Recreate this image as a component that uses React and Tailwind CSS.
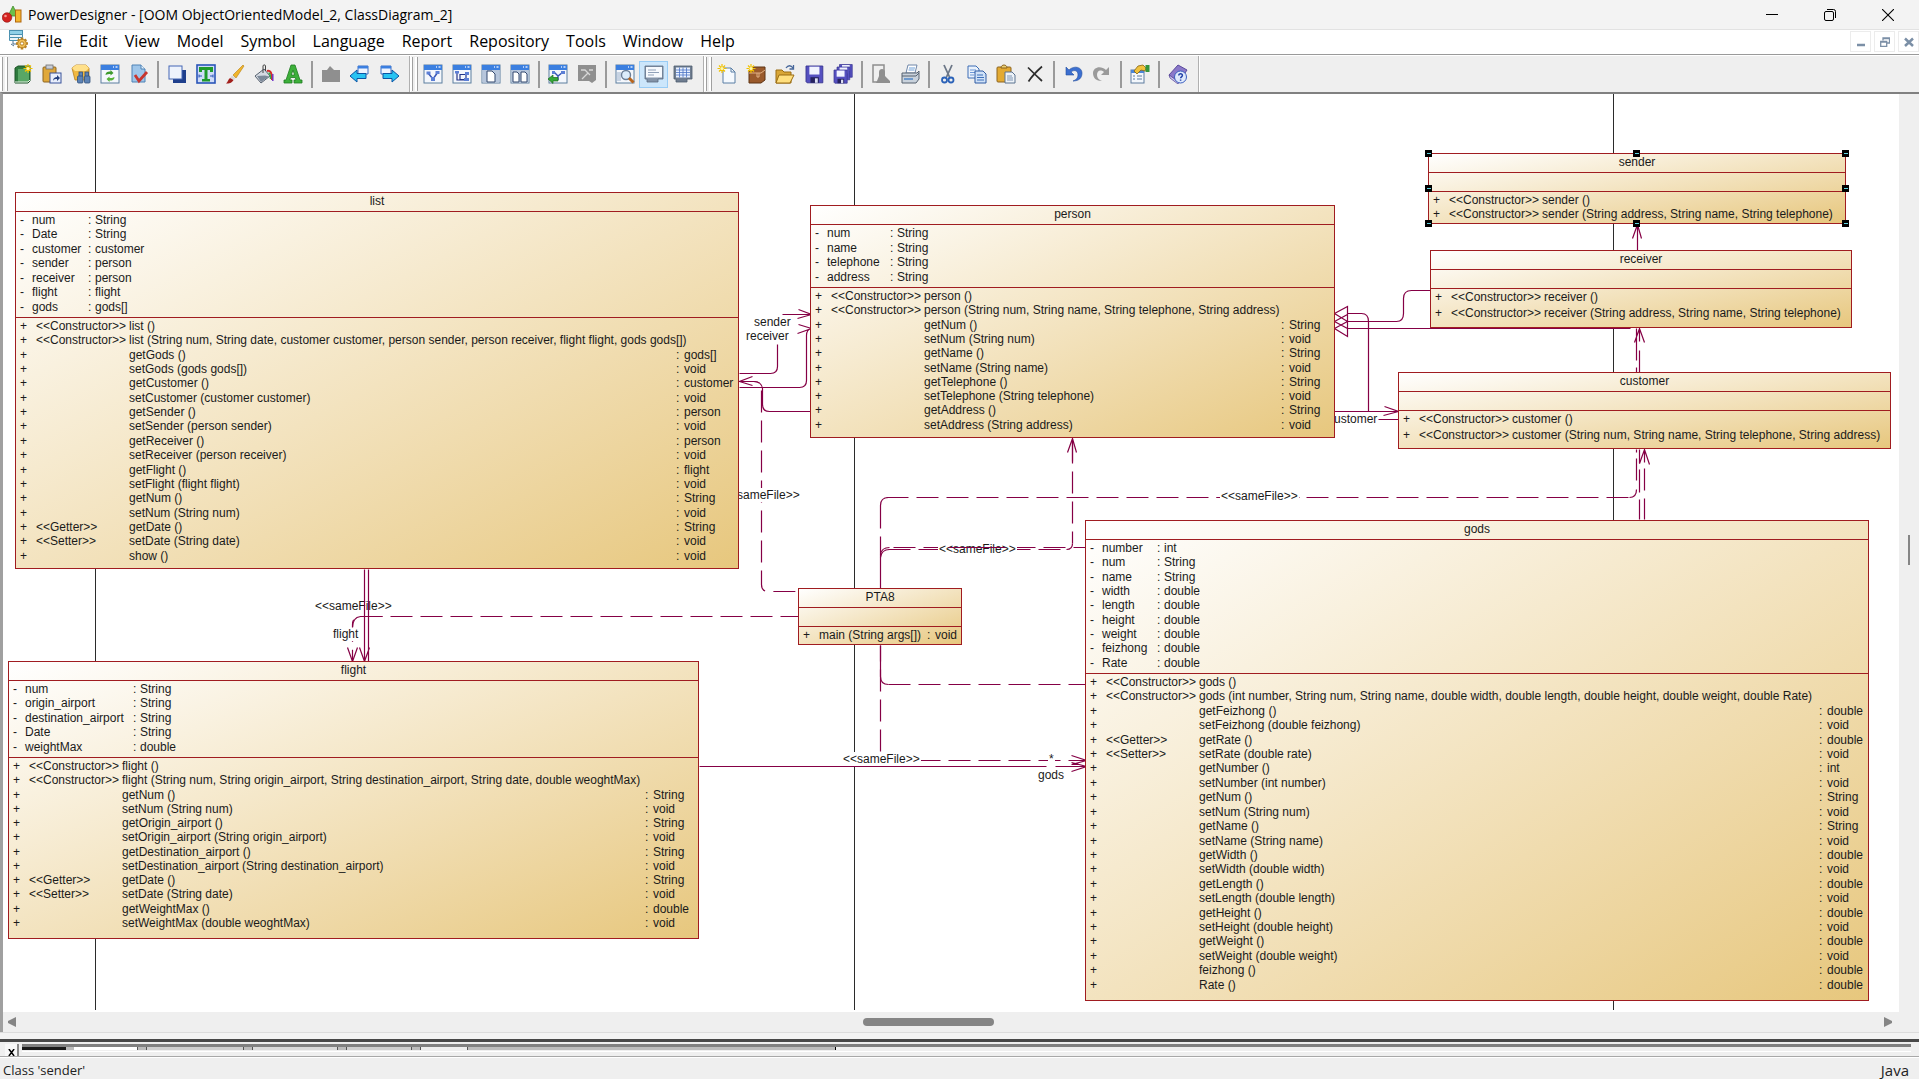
import React from "react";

const LINE = "#850045";

/* ---------- toolbar icons, each on a 20 x 20 grid ---------- */

const PageWin = ({ children }) => (
  <>
    <rect x="1" y="1" width="18" height="18" fill="#f4f7fc" stroke="#5d7f9f" />
    <rect x="1" y="1" width="18" height="5" fill="#3b7fe0" />
    <path d="M13 3h1M15.500 3h2" stroke="#dbe9ff" strokeWidth="1.5" />
    {children}
  </>
);

const Sparkle = () => (
  <g stroke="#f2c200" strokeWidth="1.200">
    <path d="M5 0v9M.5 4.500h9M2 1.500l6 6M8 1.500l-6 6" />
    <circle cx="5" cy="4.500" r="1.600" fill="#fff7b0" stroke="none" />
  </g>
);

const Floppy = () => (
  <>
    <path d="M0 0h15v15H1l-1-1z" fill="#5550c0" stroke="#37338f" strokeWidth=".8" />
    <rect x="3" y=".6" width="9" height="7" fill="#f1f3ff" />
    <rect x="4" y="10" width="7.500" height="5" fill="#26225f" />
    <rect x="8" y="11" width="2.500" height="4" fill="#dfe2f5" />
  </>
);

const icons = {
  book: (
    <>
      <path d="M2 4l3-2h12v15l-2 2H2z" fill="#2d7a3d" stroke="#1d5428" />
      <path d="M5 5h11v13H5z" fill="#58a765" />
      <path d="M2 18h13l2-2" stroke="#e8efe8" fill="none" />
      <g transform="translate(10 0)"><Sparkle /></g>
    </>
  ),
  pasteLink: (
    <>
      <rect x="1" y="3" width="13" height="15" rx="1" fill="#e0a83a" stroke="#8d6520" />
      <rect x="4" y="1" width="7" height="4" fill="#c7ccd6" stroke="#6f6f6f" strokeWidth=".8" />
      <rect x="8" y="9" width="11" height="10" fill="#e8eefb" stroke="#39529a" />
      <path d="M11 17c0-3 2-4 4-4v-2l3 3-3 3v-2c-2 0-3 0-4 2z" fill="#24407f" />
    </>
  ),
  find: (
    <>
      <path d="M1 4l4-3h10l3 3v8l-3 4H4z" fill="#f0b840" stroke="#b98220" strokeWidth=".8" />
      <path d="M1 4l3 3h11l3-3-3-3H5z" fill="#ffe08a" />
      <g fill="#5d83b5" stroke="#30507c" strokeWidth=".8">
        <rect x="8" y="8" width="3.500" height="5" /><rect x="14" y="8" width="3.500" height="5" />
        <rect x="6.500" y="12" width="5.500" height="7" rx="1" /><rect x="13.500" y="12" width="5.500" height="7" rx="1" />
      </g>
    </>
  ),
  refresh: (
    <PageWin>
      <path d="M5.500 11c0-3 3-4 5-3.500V6l3 3-3 2.500V10c-2 0-3 0-5 1z" fill="#3c9a2c" />
      <path d="M14.500 13c0 3-3 4-5 3.500V18l-3-3 3-2.500V14c2 0 3 0 5-1z" fill="#57b43a" />
    </PageWin>
  ),
  check: (
    <>
      <path d="M3 1h9l4 4v13H3z" fill="#9fc6ea" stroke="#4f82b5" />
      <path d="M12 1v4h4" fill="#e5f1fb" stroke="#4f82b5" />
      <path d="M6 11l4 6 8-9" fill="none" stroke="#c8352e" strokeWidth="2.800" />
    </>
  ),
  shadow: (
    <>
      <rect x="6" y="6" width="13" height="13" fill="#1f3f8c" />
      <rect x="2" y="2" width="13" height="13" fill="#eef3fc" stroke="#4467b5" />
    </>
  ),
  textTool: (
    <>
      <rect x="1" y="1" width="18" height="18" fill="#cfdcf7" stroke="#2a55b8" strokeWidth="1.600" />
      <path d="M3 3h14v5h-3V6h-2.500v9H14v2.500H6V15h2.500V6H6v2H3z" fill="#1f9a2c" />
      <path d="M3 12h3M14 12h3M3 10.500v3M17 10.500v3" stroke="#2a55b8" />
    </>
  ),
  brush: (
    <>
      <path d="M8 11L18 1l1 1-8 12z" fill="#f0b52c" stroke="#b67d12" strokeWidth=".6" />
      <path d="M7 11.500l3.500 2.500L9 16l-4-2z" fill="#d8d8d8" />
      <path d="M5 14l3.500 2C7 19 4 19.500 1 19.500 3 18 3 15.500 5 14z" fill="#a3201c" />
    </>
  ),
  bucket: (
    <>
      <path d="M1 12L10 5l6 7-9 7z" fill="#d5dae2" stroke="#55606e" />
      <path d="M3 12l8-.5 4 1L7 18z" fill="#7c8999" />
      <path d="M9 9V2c0-1.500 2.500-1.500 2.500 0v5" fill="none" stroke="#444" />
      <path d="M13 7c3-1 5 1 5 9" fill="none" stroke="#d42a2a" strokeWidth="2" />
      <path d="M14.500 9c1.500 0 2 3 2 6" fill="none" stroke="#2bb04a" strokeWidth="1.500" />
      <path d="M18.800 10v7" stroke="#7337c9" strokeWidth="1.500" />
    </>
  ),
  font: (
    <path d="M8 1h4l5 15h2v3h-8v-3h2l-.7-2.500H7.500L6.800 16H9v3H1v-3h2zM10 6l-1.700 5h3.300z" fill="#3db03a" stroke="#1f7c22" strokeWidth=".8" />
  ),
  greyFolder: <path d="M1 6h5l3-4 4 4h6v12H1z" fill="#8f8f8f" />,
  prev: (
    <>
      <path d="M8 2h10v8H8z" fill="#eef4ff" stroke="#3b6fc4" /><path d="M8 2h10v2.500H8z" fill="#3b7fe0" />
      <path d="M0 12l7-6v3.500h9v5H7V18z" fill="#27c3f2" stroke="#0a54a5" />
    </>
  ),
  next: (
    <>
      <path d="M2 2h10v8H2z" fill="#eef4ff" stroke="#3b6fc4" /><path d="M2 2h10v2.500H2z" fill="#3b7fe0" />
      <path d="M20 12l-7-6v3.500H4v5h9V18z" fill="#27c3f2" stroke="#0a54a5" />
    </>
  ),
  model1: (
    <PageWin>
      <path d="M5 9l5 6 5-7" fill="none" stroke="#3654b5" strokeWidth="1.500" />
      <path d="M3.500 7.500h4v3h-4zM12.500 7h4v3h-4zM8 13h4v4H8z" fill="#5c7fd6" />
    </PageWin>
  ),
  model2: (
    <PageWin>
      <path d="M5 8v8h9M8 10.500h6v5H8z" fill="none" stroke="#24358a" strokeWidth="1.200" />
      <path d="M3 7h4v2.500H3zM13 8h4v3h-4zM12 14h5v3h-5z" fill="#5c7fd6" />
    </PageWin>
  ),
  page1: (
    <PageWin>
      <rect x="1.500" y="6" width="17" height="12.500" fill="#b7c6dc" />
      <path d="M6 7h5l3 3v8H6z" fill="#fff" stroke="#33486e" />
    </PageWin>
  ),
  page2: (
    <PageWin>
      <rect x="1.500" y="6" width="17" height="12.500" fill="#b7c6dc" />
      <path d="M3 8h4l2 2v8H3zM11 8h4l2 2v8h-6z" fill="#fff" stroke="#33486e" />
    </PageWin>
  ),
  modelBack: (
    <PageWin>
      <path d="M6 8l4 4 5-4M10 12v4" fill="none" stroke="#3654b5" strokeWidth="1.400" />
      <path d="M4 7h3v3H4zM13 7h4v3h-4z" fill="#5c7fd6" />
      <path d="M0 15l5-4v2.500h5v3.500H5V19.500z" fill="#35a838" stroke="#1a6a20" strokeWidth=".7" />
    </PageWin>
  ),
  greyWin: (
    <>
      <path d="M1 1h18v15l-4 3-3-2H1z" fill="#8f8f8f" />
      <path d="M4 6h4l5 5M12 6h4M5 15l6-6" fill="none" stroke="#d8d8d8" strokeWidth="1.300" />
    </>
  ),
  winFind: (
    <PageWin>
      <path d="M3 8v9M5 8v9" stroke="#9bb0cb" />
      <circle cx="11" cy="11" r="4.500" fill="#dcecfb" stroke="#6c7f97" strokeWidth="1.400" />
      <path d="M14 14l4.500 4.500" stroke="#b9651d" strokeWidth="3" />
    </PageWin>
  ),
  output: (
    <>
      <path d="M1 2h18v13h-5v3H3v-3H1z" fill="#8393a8" stroke="#5b6b80" strokeWidth=".8" />
      <rect x="2" y="3" width="16" height="10.500" fill="#f6f9fd" />
      <path d="M4 6h8M4 8.500h11M4 11h6" stroke="#8fa0b8" />
    </>
  ),
  grid: (
    <>
      <path d="M1 2h18v13h-5v3H3v-3H1z" fill="#6f7d90" stroke="#4f5d70" strokeWidth=".8" />
      <rect x="3" y="3.500" width="14" height="10" fill="#eaf2ff" />
      <path d="M3 6h14M3 8.500h14M3 11h14M6.500 3.500v10M10 3.500v10M13.500 3.500v10" stroke="#4b74c4" strokeWidth=".8" />
    </>
  ),
  newPage: (
    <>
      <path d="M6 4h8l4 4v11H6z" fill="#f5f9fe" stroke="#5b7ea5" /><path d="M14 4v4h4" fill="none" stroke="#5b7ea5" />
      <Sparkle />
    </>
  ),
  newProject: (
    <>
      <path d="M3 6l5-3h11v13l-4 3H3z" fill="#9a5a2c" stroke="#5f3415" />
      <path d="M3 9h12l4-3M11 9v4h2V9" fill="none" stroke="#e2b184" />
      <Sparkle />
    </>
  ),
  open: (
    <>
      <path d="M1 6h6l2 2h7v11H1z" fill="#d9a637" stroke="#9a6d14" /><path d="M4 11h15l-4 8H1z" fill="#ffdf7e" stroke="#9a6d14" />
      <path d="M11 4c2-3 5-3 7 0M18.500 1v4h-4" fill="none" stroke="#47679b" strokeWidth="1.300" />
    </>
  ),
  save: <g transform="translate(2 2) scale(1.120)"><Floppy /></g>,
  saveAll: (
    <>
      <g transform="translate(6.500 .5) scale(.85)"><Floppy /></g>
      <g transform="translate(4 3) scale(.85)"><Floppy /></g>
      <g transform="translate(1 6) scale(.88)"><Floppy /></g>
    </>
  ),
  preview: (
    <>
      <path d="M2 1h11v17H2z" fill="none" stroke="#8f8f8f" strokeWidth="1.500" />
      <path d="M6 17l2-5V8c0-4 6-4 6 0v4l5 5v2H5z" fill="#8f8f8f" />
    </>
  ),
  print: (
    <>
      <path d="M6 9l2-8h9l-2 8z" fill="#fff" stroke="#6f86a8" /><path d="M9 4h6M8.500 6h6" stroke="#6fa0d8" />
      <path d="M2 9h15l2-2v8l-3 4H2z" fill="#c9d2dc" stroke="#566270" /><path d="M2 12h14l3-3" stroke="#566270" fill="none" />
      <path d="M4 15h9" stroke="#4e86c8" strokeWidth="1.500" />
    </>
  ),
  cut: (
    <>
      <path d="M6 1l5.500 12M14 1L8.500 13" stroke="#6c7787" strokeWidth="1.800" />
      <circle cx="6.500" cy="16" r="2.500" fill="none" stroke="#2b62b8" strokeWidth="1.800" />
      <circle cx="13" cy="16" r="2.500" fill="none" stroke="#2b62b8" strokeWidth="1.800" />
    </>
  ),
  copy: (
    <>
      <path d="M1 2h8l3 3v9H1z" fill="#eaf2fc" stroke="#3c6cb4" /><path d="M3 6h6M3 8.500h6M3 11h4" stroke="#6d97d6" />
      <path d="M8 7h8l3 3v9H8z" fill="#cfe1f7" stroke="#2e5ba3" /><path d="M10 11h6M10 13.500h7M10 16h7" stroke="#3f70ba" />
    </>
  ),
  paste: (
    <>
      <rect x="1" y="3" width="14" height="15" rx="1" fill="#e3aa32" stroke="#8d6520" />
      <path d="M5 4c0-4 6-4 6 0z" fill="#e8cf74" stroke="#8d6520" />
      <path d="M9 8h7l3 3v8H9z" fill="#eef3f8" stroke="#5a7390" /><path d="M11 12h5M11 14h6M11 16h6" stroke="#7e96b5" />
    </>
  ),
  del: <path d="M3 3.500c4 4 8 8 14 13.500M17 2.500C12 7 7 12 3.500 17.500" fill="none" stroke="#2d2d2d" strokeWidth="1.700" />,
  undo: (
    <path d="M3 3v8h8L8 8c4-3 7-1 7 3 0 3-2 5-5 6 6 0 9-3 9-8C19 3 11 1 6 6z" fill="#3c6fd0" stroke="#234f9f" strokeWidth=".6" />
  ),
  redo: (
    <path d="M17 3v8H9l3-3C8 5 5 7 5 11c0 3 2 5 5 6-6 0-9-3-9-8C1 3 9 1 14 6z" fill="#9a9a9a" />
  ),
  props: (
    <>
      <rect x="1" y="6" width="13" height="13" fill="#f3f7fc" stroke="#5e7c9f" /><path d="M1 6h13v3H1z" fill="#4c86d8" />
      <path d="M3 12h2M7 12h5M3 15h2M7 15h5" stroke="#5e7c9f" />
      <path d="M4 7l4-5 5-1 3 3-1 3-4-1-4 4z" fill="#f0c23c" stroke="#876312" strokeWidth=".8" />
      <rect x="15.500" y="1" width="4" height="7" fill="#35953c" />
    </>
  ),
  help: (
    <>
      <path d="M1 11L10 1l9 5-8 12z" fill="#8a78c9" stroke="#5b4a9c" /><path d="M1 11l1 3 8 6 1-2z" fill="#cfc8ee" stroke="#5b4a9c" strokeWidth=".8" />
      <circle cx="12.500" cy="13" r="6" fill="#dfe9fb" stroke="#3b5fc0" />
      <path d="M10.800 11.500c0-2.500 3.800-2.300 3.600 0-.1 1.300-1.800 1.400-1.800 2.800M12.600 15.500v1.300" fill="none" stroke="#2242a8" strokeWidth="1.500" />
    </>
  ),
};

const toolbars = [
  [
    ["book", "New model"], ["pasteLink", "Paste as shortcut"], ["find", "Find objects"], ["refresh", "Refresh"], ["check", "Check model"], null,
    ["shadow", "Shadow"], ["textTool", "Text"], ["brush", "Line style"], ["bucket", "Fill"], ["font", "Font"], null,
    ["greyFolder", "Up one level"], ["prev", "Previous diagram"], ["next", "Next diagram"],
  ],
  [
    ["model1", "Diagram"], ["model2", "Packages"], ["page1", "Page view"], ["page2", "Two pages"], null,
    ["modelBack", "Back"], ["greyWin", "Forward"], null,
    ["winFind", "Browser"], ["output", "Output", true], ["grid", "Result list"],
  ],
  [
    ["newPage", "New"], ["newProject", "New project"], ["open", "Open"], ["save", "Save"], ["saveAll", "Save all"], null,
    ["preview", "Print preview"], ["print", "Print"], null,
    ["cut", "Cut"], ["copy", "Copy"], ["paste", "Paste"], ["del", "Delete"], null,
    ["undo", "Undo"], ["redo", "Redo"], null,
    ["props", "Properties"], null,
    ["help", "Help"],
  ],
];

function Toolbar({ items }) {
  return (
    <div role="toolbar" className="flex h-full items-center border-r border-[#b0b0b0] pr-[6px] shadow-[1px_0_0_#fff]">
      <div className="flex h-[34px] w-2 gap-[2px]">
        <span className="w-[3px] border-r border-[#a0a0a0] bg-white" />
        <span className="w-[3px] border-r border-[#a0a0a0] bg-white" />
      </div>
      {items.map((it, i) =>
        it ? (
          <button
            key={i}
            type="button"
            aria-label={it[1]}
            title={it[1]}
            className={
              it[2]
                ? "flex h-[27px] w-[29px] items-center justify-center border border-[#99ccf5] bg-[#cce6fb]"
                : "flex h-[27px] w-[29px] items-center justify-center"
            }
          >
            <svg viewBox="0 0 20 20" className="h-5 w-5">{icons[it[0]]}</svg>
          </button>
        ) : (
          <span key={i} className="flex h-[27px] w-[9px] justify-center"><span className="w-[2px] bg-[#9a9a9a]" /></span>
        )
      )}
    </div>
  );
}

/* ---------- class diagram data (sheet coordinates) ---------- */

const C = "<<Constructor>>";
const G = "<<Getter>>";
const S = "<<Setter>>";
const m = (name, type = "", stereo = "") => ({ name, type, stereo });

const classes = [
  {
    title: "list", x: 15, y: 192, w: 724, h: 377, attrH: 106, nameW: 56, sigW: 547,
    attrs: [["num", "String"], ["Date", "String"], ["customer", "customer"], ["sender", "person"], ["receiver", "person"], ["flight", "flight"], ["gods", "gods[]"]],
    methods: [
      m("list ()", "", C),
      m("list (String num, String date, customer customer, person sender, person receiver, flight flight, gods gods[])", "", C),
      m("getGods ()", "gods[]"), m("setGods (gods gods[])", "void"),
      m("getCustomer ()", "customer"), m("setCustomer (customer customer)", "void"),
      m("getSender ()", "person"), m("setSender (person sender)", "void"),
      m("getReceiver ()", "person"), m("setReceiver (person receiver)", "void"),
      m("getFlight ()", "flight"), m("setFlight (flight flight)", "void"),
      m("getNum ()", "String"), m("setNum (String num)", "void"),
      m("getDate ()", "String", G), m("setDate (String date)", "void", S),
      m("show ()", "void"),
    ],
  },
  {
    title: "person", x: 810, y: 205, w: 525, h: 233, attrH: 63, nameW: 63, sigW: 357,
    attrs: [["num", "String"], ["name", "String"], ["telephone", "String"], ["address", "String"]],
    methods: [
      m("person ()", "", C), m("person (String num, String name, String telephone, String address)", "", C),
      m("getNum ()", "String"), m("setNum (String num)", "void"),
      m("getName ()", "String"), m("setName (String name)", "void"),
      m("getTelephone ()", "String"), m("setTelephone (String telephone)", "void"),
      m("getAddress ()", "String"), m("setAddress (String address)", "void"),
    ],
  },
  {
    title: "sender", x: 1428, y: 153, w: 418, h: 71, attrH: 19, nameW: 0, sigW: 290, selected: true, tight: true, attrs: [],
    methods: [m("sender ()", "", C), m("sender (String address, String name, String telephone)", "", C)],
  },
  {
    title: "receiver", x: 1430, y: 250, w: 422, h: 78, attrH: 19, nameW: 0, sigW: 290, attrs: [],
    methods: [m("receiver ()", "", C), m("receiver (String address, String name, String telephone)", "", C)],
  },
  {
    title: "customer", x: 1398, y: 372, w: 493, h: 77, attrH: 19, nameW: 0, sigW: 360, attrs: [],
    methods: [m("customer ()", "", C), m("customer (String num, String name, String telephone, String address)", "", C)],
  },
  {
    title: "PTA8", x: 798, y: 588, w: 164, h: 57, attrH: 19, nameW: 0, sigW: 108, plain: true, tight: true, attrs: [],
    methods: [m("main (String args[])", "void")],
  },
  {
    title: "gods", x: 1085, y: 520, w: 784, h: 481, attrH: 134, nameW: 55, sigW: 620,
    attrs: [["number", "int"], ["num", "String"], ["name", "String"], ["width", "double"], ["length", "double"], ["height", "double"], ["weight", "double"], ["feizhong", "double"], ["Rate", "double"]],
    extra: true,
    methods: [
      m("gods ()", "", C),
      m("gods (int number, String num, String name, double width, double length, double height, double weight, double Rate)", "", C),
      m("getFeizhong ()", "double"), m("setFeizhong (double feizhong)", "void"),
      m("getRate ()", "double", G), m("setRate (double rate)", "void", S),
      m("getNumber ()", "int"), m("setNumber (int number)", "void"),
      m("getNum ()", "String"), m("setNum (String num)", "void"),
      m("getName ()", "String"), m("setName (String name)", "void"),
      m("getWidth ()", "double"), m("setWidth (double width)", "void"),
      m("getLength ()", "double"), m("setLength (double length)", "void"),
      m("getHeight ()", "double"), m("setHeight (double height)", "void"),
      m("getWeight ()", "double"), m("setWeight (double weight)", "void"),
      m("feizhong ()", "double"), m("Rate ()", "double"),
    ],
  },
  {
    title: "flight", x: 8, y: 661, w: 691, h: 278, attrH: 77, nameW: 108, sigW: 523,
    attrs: [["num", "String"], ["origin_airport", "String"], ["destination_airport", "String"], ["Date", "String"], ["weightMax", "double"]],
    extra: true,
    methods: [
      m("flight ()", "", C),
      m("flight (String num, String origin_airport, String destination_airport, String date, double weoghtMax)", "", C),
      m("getNum ()", "String"), m("setNum (String num)", "void"),
      m("getOrigin_airport ()", "String"), m("setOrigin_airport (String origin_airport)", "void"),
      m("getDestination_airport ()", "String"), m("setDestination_airport (String destination_airport)", "void"),
      m("getDate ()", "String", G), m("setDate (String date)", "void", S),
      m("getWeightMax ()", "double"), m("setWeightMax (double weoghtMax)", "void"),
    ],
  },
];

const handleSpots = [
  "-left-1 -top-1", "left-1/2 -ml-1 -top-1", "-right-1 -top-1",
  "-left-1 top-1/2 -mt-1", "-right-1 top-1/2 -mt-1",
  "-left-1 -bottom-1", "left-1/2 -ml-1 -bottom-1", "-right-1 -bottom-1",
];

function ClassBox({ c }) {
  const cols = `16px ${c.plain ? 0 : 93}px ${c.sigW}px 8px auto`;
  return (
    <section
      aria-label={c.title}
      className="absolute flex flex-col border border-[#a01c20] bg-linear-to-br from-white to-[#e7c77d] text-[12px] leading-[14px] whitespace-nowrap text-[#1a1a1a]"
      style={{ left: c.x, top: c.y, width: c.w, height: c.h }}
    >
      <h2 className="h-[19px] shrink-0 border-b border-[#a01c20] pt-px text-center">{c.title}</h2>
      <ul className="grid shrink-0 auto-rows-fr border-b border-[#a01c20] pt-px pb-[3px] pl-1" style={{ height: c.attrH }}>
        {c.attrs.map(([name, type]) => (
          <li key={name} className="grid" style={{ gridTemplateColumns: `12px ${c.nameW}px 7px auto` }}>
            <span>-</span><span>{name}</span><span>:</span><span>{type}</span>
          </li>
        ))}
      </ul>
      <ul className={c.extra ? "grid flex-1 auto-rows-fr pt-px pb-[8px] pl-1" : c.tight ? "grid flex-1 auto-rows-fr pt-px pb-[2px] pl-1" : "grid flex-1 auto-rows-fr pt-px pb-[5px] pl-1"}>
        {c.methods.map((r, i) => (
          <li key={i} className="grid" style={{ gridTemplateColumns: cols }}>
            <span>+</span><span>{c.plain ? "" : r.stereo}</span><span>{r.name}</span>
            <span>{r.type && ":"}</span><span>{r.type}</span>
          </li>
        ))}
      </ul>
      {c.selected && handleSpots.map((p) => (
        <i key={p} className={`absolute h-[7px] w-[7px] bg-black ${p}`}><b className="absolute top-[3px] left-[2px] h-px w-[4px] bg-[#63d3e0]" /></i>
      ))}
    </section>
  );
}

const labels = [
  ["sender", 753, 315], ["receiver", 745, 329], ["<<sameFile>>", 722, 488], ["<<sameFile>>", 314, 599],
  ["flight", 332, 627], ["<<sameFile>>", 842, 752], ["gods", 1037, 768], ["*", 1048, 752],
  ["<<sameFile>>", 938, 542], ["<<sameFile>>", 1220, 489], ["customer", 1327, 412],
];

const solid = [
  "M739 373H770Q777 373 777 366V344", "M782 314H811M798 309L811 314L797 318",
  "M739 387H799Q806 387 806 380V335Q806 329 811 328M798 324L811 328L797 333",
  "M811 411H769Q762 411 762 404V388Q761 381 753 381H739M752 376L739 381L752 385",
  "M699 766H1046M1055 766H1086M1071 762L1086 766L1071 771M1071 755L1086 760L1071 764",
  "M880 645V676Q880 684 888 684", "M880 588V536M880 528V505Q880 497 888 497",
  "M880 557Q881 549 889 549", "M880 554Q881 547 889 547", "M1066 549Q1072 549 1072 543",
  "M1072 461V438M1067 452L1072 438L1076 452",
  "M1334 313L1347 306V321ZM1334 321L1347 314V328ZM1334 328L1347 321V336Z",
  "M1347 313H1361Q1368 313 1368 321V411", "M1347 321H1396Q1403 321 1403 313V298Q1403 290 1411 290H1430",
  "M1347 328H1630M1430 327H1630", "M1334 411H1398M1384 406L1398 411L1383 415M1378 419H1398",
  "M1637 251V224M1632 238L1637 224L1641 238", "M1636 328V360M1639 328V341M1639 350V372M1636 367V372M1634 342L1639 328L1644 342",
  "M1629 497Q1636 497 1636 489M1636 480V458M1636 452V449M1639 449V463M1639 469V492M1639 499V519",
  "M1644 449V462M1644 468V490M1644 498V519M1639 463L1644 449L1649 464",
  "M1216 497H1220M1296 497H1299",
];

const dashed = [
  ["M739 381H754Q761 381 761 388V584Q761 591 768 591H798", 2],
  ["M798 616H360Q352 616 352 624V661", 4],
  ["M880 645V752", 6], ["M918 760H1086", 0], ["M888 684H1086", 0],
  ["M886 497H1629", 0], ["M1086 547H888", 9], ["M888 549H1066", 0], ["M1072 441V543", 0],
];

function Diagram() {
  return (
    <div className="absolute -top-[94px] -left-[3px] h-[1104px] w-[1899px] font-['Liberation_Sans',Arial,sans-serif]">
      <svg className="absolute inset-0 h-full w-full" fill="none">
        <path d="M95.500 94V1010M854.500 94V1010M1613.500 94V1010" stroke="#2b2b2b" />
        <g transform="translate(.5 .5)" stroke={LINE} strokeWidth="1.200">
          {solid.map((d) => <path key={d} d={d} />)}
          {dashed.map(([d, o]) => <path key={d} d={d} strokeDasharray="22 8" strokeDashoffset={o} />)}
        </g>
      </svg>
      {labels.map(([t, x, y]) => (
        <span key={`${x}-${y}`} className="absolute bg-white px-px text-[12px] leading-[14px] whitespace-nowrap text-[#1a1a1a]" style={{ left: x, top: y }}>{t}</span>
      ))}
      <svg className="absolute inset-0 h-full w-full" fill="none">
        <g transform="translate(.5 .5)" stroke={LINE} strokeWidth="1.200">
          <path d="M364 569V661M368 569V661M359 647L364 661L369 647M347 647L352 661L357 647M948 547H1005" />
          <path d="M382 616H360Q352 617 352 627" />
        </g>
      </svg>
      {classes.map((c) => <ClassBox key={c.title} c={c} />)}
    </div>
  );
}

/* ---------- window frame ---------- */

const menus = ["File", "Edit", "View", "Model", "Symbol", "Language", "Report", "Repository", "Tools", "Window", "Help"];

export default function App() {
  return (
    <div className="flex h-screen flex-col overflow-hidden bg-[#efefef] font-['Open_Sans','Noto_Sans',sans-serif] text-black">
      <header className="flex h-[30px] shrink-0 items-center border-b border-[#e2e2e2] bg-[#f3f3f3]">
        <svg viewBox="0 0 20 20" className="ml-[2px] h-5 w-5">
          <path d="M11 1l5 10H6z" fill="#6cc04a" stroke="#3d8a2a" strokeWidth=".8" />
          <rect x="13.500" y="5" width="5.500" height="12" fill="#f5b62e" stroke="#b0660f" />
          <circle cx="5" cy="12.500" r="4.800" fill="#d3221f" stroke="#8c1412" strokeWidth=".6" />
          <circle cx="3.500" cy="11" r="1.300" fill="#f59a92" />
        </svg>
        <h1 className="ml-[6px] flex-1 text-[14px]">PowerDesigner - [OOM ObjectOrientedModel_2, ClassDiagram_2]</h1>
        <div className="mr-[2px] flex h-full">
          <button type="button" aria-label="Minimize" className="flex w-[58px] items-center justify-center">
            <svg viewBox="0 0 12 12" className="h-3 w-3"><path d="M0 5.500h12" stroke="#000" /></svg>
          </button>
          <button type="button" aria-label="Restore" className="flex w-[58px] items-center justify-center">
            <svg viewBox="0 0 12 12" className="h-3 w-3" fill="none" stroke="#000">
              <rect x=".5" y="2.500" width="9" height="9" rx="1.500" /><path d="M3 .5h6.500q2 0 2 2V9" />
            </svg>
          </button>
          <button type="button" aria-label="Close" className="flex w-[58px] items-center justify-center">
            <svg viewBox="0 0 12 12" className="h-3 w-3"><path d="M0 0l12 12M12 0L0 12" stroke="#000" strokeWidth="1.100" /></svg>
          </button>
        </div>
      </header>

      <nav className="flex h-[25px] shrink-0 items-start border-b border-[#9a9a9a] bg-white">
        <svg viewBox="0 0 20 20" className="ml-[9px] h-5 w-5">
          <rect x=".5" y=".5" width="13" height="4" fill="#8fd0e8" stroke="#4a90b0" />
          <path d="M.5 4.500h13v3H.5zM.5 7.500h9v3h-9z" fill="#e8f4fa" stroke="#4a90b0" />
          <path d="M4 11v3h4M2 14l3 2" fill="none" stroke="#4a6f90" />
          <g transform="translate(13 13.500)">
            <path d="M0-6v12M-6 0h12M-4.200-4.200l8.400 8.400M4.200-4.200l-8.400 8.400" stroke="#b98224" strokeWidth="2.600" />
            <circle r="4.300" fill="#f0bf58" stroke="#b98224" /><circle r="1.700" fill="#fff" stroke="#b98224" />
          </g>
        </svg>
        <div className="flex flex-1 gap-px">
          {menus.map((t) => <button key={t} type="button" className="px-2 text-[16px] leading-[22px]">{t}</button>)}
        </div>
        <div className="flex gap-[3px] pt-px text-[#7b8fa6]">
          <button type="button" aria-label="Minimize diagram" className="flex h-[21px] w-[21px] items-center justify-center border border-[#ececec]">
            <svg viewBox="0 0 10 10" className="h-[10px] w-[10px]"><path d="M1 8h8" stroke="currentColor" strokeWidth="2.500" /></svg>
          </button>
          <button type="button" aria-label="Restore diagram" className="flex h-[21px] w-[21px] items-center justify-center border border-[#ececec]">
            <svg viewBox="0 0 10 10" className="h-[10px] w-[10px]" fill="none" stroke="currentColor"><path d="M3 3.500V1h6.500v5H7M3 1.500h6.500" strokeWidth="1.300" /><path d="M.7 4.500h6v5h-6zM.7 5h6" strokeWidth="1.300" /></svg>
          </button>
          <button type="button" aria-label="Close diagram" className="flex h-[21px] w-[21px] items-center justify-center border border-[#ececec]">
            <svg viewBox="0 0 10 10" className="h-[10px] w-[10px]"><path d="M1 1.500l8 7.500M9 1.500L1 9" stroke="currentColor" strokeWidth="2.500" /></svg>
          </button>
        </div>
      </nav>

      <div className="flex h-[37px] shrink-0 items-center border-t border-white">
        {toolbars.map((items, i) => <Toolbar key={i} items={items} />)}
      </div>

      <main className="flex min-h-0 flex-1 flex-col border-t-2 border-l-3 border-[#808080] border-l-[#a0a0a0]">
        <div className="flex min-h-0 flex-1">
          <div className="relative flex-1 overflow-hidden bg-white"><Diagram /></div>
          <div className="flex w-5 shrink-0 justify-center pt-[441px]"><span className="h-[30px] w-[2px] bg-[#858585]" /></div>
        </div>
        <div className="flex h-5 shrink-0 items-center pr-[27px] pl-[5px]">
          <svg viewBox="0 0 8 10" className="h-[10px] w-2"><path d="M8 0v10L0 6V4z" fill="#858585" /></svg>
          <div className="flex flex-1 pl-3"><span className="ml-[45%] h-2 w-[131px] rounded-full bg-[#858585]" /></div>
          <svg viewBox="0 0 8 10" className="h-[10px] w-2"><path d="M0 0v10l8-4V4z" fill="#858585" /></svg>
        </div>
      </main>

      <div className="h-[7px] shrink-0 border-t border-[#dcdcdc] bg-[#f3f3f3]" />
      <div className="h-[3px] shrink-0 bg-[#484848]" />
      <div className="flex h-[15px] shrink-0 gap-[3px] border-b border-[#a8a8a8] pt-[2px] pr-[8px] pl-[5px]">
        <button type="button" aria-label="Close output" className="flex w-[14px] items-center justify-center border-r-2 border-[#8a8a8a] bg-[#f8f8f8]">
          <svg viewBox="0 0 8 8" className="mt-1 h-[7px] w-[7px]"><path d="M1 0l6 8M7 0L1 8" stroke="#000" strokeWidth="1.700" /></svg>
        </button>
        <div className="flex-1">
          <div className="h-[3px] bg-[#808080]" />
          <div className="flex h-[3px] w-[814px] gap-[8px] border-r border-black bg-[#bcbcbc]">
            <span className="w-[44px] bg-[#1a1a1a]" />
            <span className="w-[64px] border-r border-[#555] bg-white" />
            <span className="w-[98px] border-r border-l border-[#555] bg-[#cfcfcf]" />
            <span className="w-[86px] border-r border-l border-[#555] bg-[#dadada]" />
            <span className="w-[66px] border-r border-l border-[#555] bg-[#cfcfcf]" />
            <span className="w-[48px] border-r border-l border-[#555] bg-[#eee]" />
          </div>
          <div className="mt-px h-px bg-white" />
        </div>
      </div>

      <footer className="flex h-[22px] shrink-0 items-center justify-between border-t border-white pt-[2px] pr-[10px] pl-[3px] text-[13px] leading-[20px] text-[#222]">
        <span>Class 'sender'</span>
        <span className="text-[15px]">Java</span>
      </footer>
    </div>
  );
}
